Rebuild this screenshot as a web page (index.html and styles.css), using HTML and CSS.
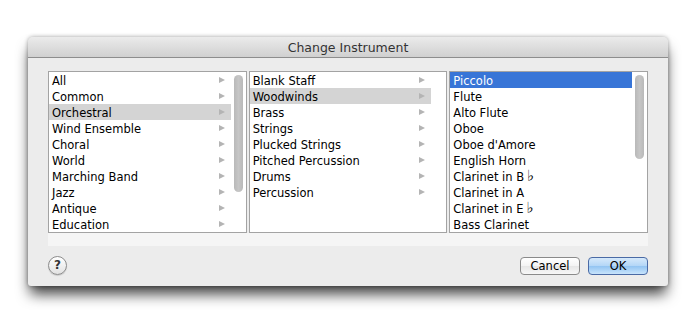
FILE: index.html
```html
<!DOCTYPE html>
<html lang="en">
<head>
    <meta charset="UTF-8">
    <title>Change Instrument</title>
    <link rel="stylesheet" href="styles.css">
</head>
<body>
    <div class="window">
        <div class="titlebar">Change Instrument</div>
        <div class="content">
            <!-- browser columns -->
            <div class="browser">
                <div class="column">
                    <ul class="list">
                        <li class="row">All<span class="arrow"></span></li>
                        <li class="row">Common<span class="arrow"></span></li>
                        <li class="row selected">Orchestral<span class="arrow"></span></li>
                        <li class="row">Wind Ensemble<span class="arrow"></span></li>
                        <li class="row">Choral<span class="arrow"></span></li>
                        <li class="row">World<span class="arrow"></span></li>
                        <li class="row">Marching Band<span class="arrow"></span></li>
                        <li class="row">Jazz<span class="arrow"></span></li>
                        <li class="row">Antique<span class="arrow"></span></li>
                        <li class="row">Education<span class="arrow"></span></li>
                    </ul>
                    <div class="scroller"><div class="thumb" style="height: 117px"></div></div>
                </div>
                <div class="column">
                    <ul class="list">
                        <li class="row">Blank Staff<span class="arrow"></span></li>
                        <li class="row selected">Woodwinds<span class="arrow"></span></li>
                        <li class="row">Brass<span class="arrow"></span></li>
                        <li class="row">Strings<span class="arrow"></span></li>
                        <li class="row">Plucked Strings<span class="arrow"></span></li>
                        <li class="row">Pitched Percussion<span class="arrow"></span></li>
                        <li class="row">Drums<span class="arrow"></span></li>
                        <li class="row">Percussion<span class="arrow"></span></li>
                    </ul>
                    <div class="scroller"></div>
                </div>
                <div class="column">
                    <ul class="list">
                        <li class="row active">Piccolo</li>
                        <li class="row">Flute</li>
                        <li class="row">Alto Flute</li>
                        <li class="row">Oboe</li>
                        <li class="row">Oboe d'Amore</li>
                        <li class="row">English Horn</li>
                        <li class="row">Clarinet in B<span class="flat">&#9837;</span></li>
                        <li class="row">Clarinet in A</li>
                        <li class="row">Clarinet in E<span class="flat">&#9837;</span></li>
                        <li class="row">Bass Clarinet</li>
                    </ul>
                    <div class="scroller"><div class="thumb" style="height: 84px"></div></div>
                </div>
            </div>
            <div class="hscroll"></div>
            <!-- buttons -->
            <div class="footer">
                <button class="help">?</button>
                <div class="actions">
                    <button class="button">Cancel</button>
                    <button class="button default">OK</button>
                </div>
            </div>
        </div>
    </div>
</body>
</html>
```

FILE: styles.css
```css
html, body {
    height: 100%;
}
body {
    margin: 0;
    background: #fff;
    font-family: "DejaVu Sans", sans-serif;
    color: #000;
}
.window {
    width: 640px;
    margin: 37px 0 0 28px;
    background: #ececec;
    border-radius: 5px 5px 3px 3px;
    box-shadow: 0 10px 14px -2px rgba(0,0,0,0.75), 0 0 4px rgba(0,0,0,0.35);
}
.titlebar {
    height: 20px;
    line-height: 21px;
    text-align: center;
    font-size: 12.5px;
    color: #333;
    border-radius: 5px 5px 0 0;
    background: linear-gradient(#ebebeb, #d0d0d0);
    border-bottom: 1px solid #8d8d8d;
}
.content {
    padding: 13px 20px 11px 20px;
}
.browser {
    display: flex;
    gap: 2px;
}
.column {
    flex: 1;
    display: flex;
    height: 160px;
    background: #fff;
    border: 1px solid #a3a3a3;
}
.list {
    flex: 1;
    list-style: none;
    margin: 0;
    padding: 0;
}
.row {
    position: relative;
    height: 16px;
    line-height: 18px;
    padding-left: 3px;
    font-size: 11.5px;
    white-space: nowrap;
    overflow: hidden;
}
.row.selected {
    background: #d4d4d4;
}
.row.active {
    background: #3875d7;
    color: #fff;
}
.flat {
    font-size: 15px;
    line-height: 0;
    margin-left: 3px;
}
.arrow {
    position: absolute;
    right: 6px;
    top: 5px;
    width: 0;
    height: 0;
    border-top: 3.5px solid transparent;
    border-bottom: 3.5px solid transparent;
    border-left: 6px solid #b4b4b4;
}
.scroller {
    width: 15px;
    padding-top: 3px;
}
.thumb {
    width: 9px;
    margin-left: 3px;
    border-radius: 5px;
    background: linear-gradient(to right, #b9b9b9, #c6c6c6, #b9b9b9);
}
.hscroll {
    height: 13px;
    background: #f5f5f5;
}
.footer {
    display: flex;
    align-items: center;
    justify-content: space-between;
    margin-top: 10px;
}
.help {
    width: 19px;
    height: 19px;
    padding: 0;
    border-radius: 50%;
    border: 1px solid #8c8c8c;
    background: linear-gradient(#ffffff, #e2e2e2);
    font-family: "DejaVu Sans", sans-serif;
    font-size: 12px;
    font-weight: bold;
    color: #333;
    line-height: 17px;
    box-shadow: 0 1px 1px rgba(0,0,0,0.15);
}
.actions {
    display: flex;
    gap: 8px;
}
.button {
    width: 60px;
    height: 18px;
    padding: 0;
    border: 1px solid #8a8a8a;
    border-radius: 4px;
    background: linear-gradient(#ffffff, #f3f3f3 50%, #e6e6e6 51%, #f7f7f7);
    font-family: "DejaVu Sans", sans-serif;
    font-size: 11.5px;
    color: #000;
    line-height: 16px;
}
.button.default {
    border-color: #4a6aa5;
    background: linear-gradient(#d6e9fb, #b3d6f7 50%, #92c4f2 51%, #c8e4fc);
}
```
